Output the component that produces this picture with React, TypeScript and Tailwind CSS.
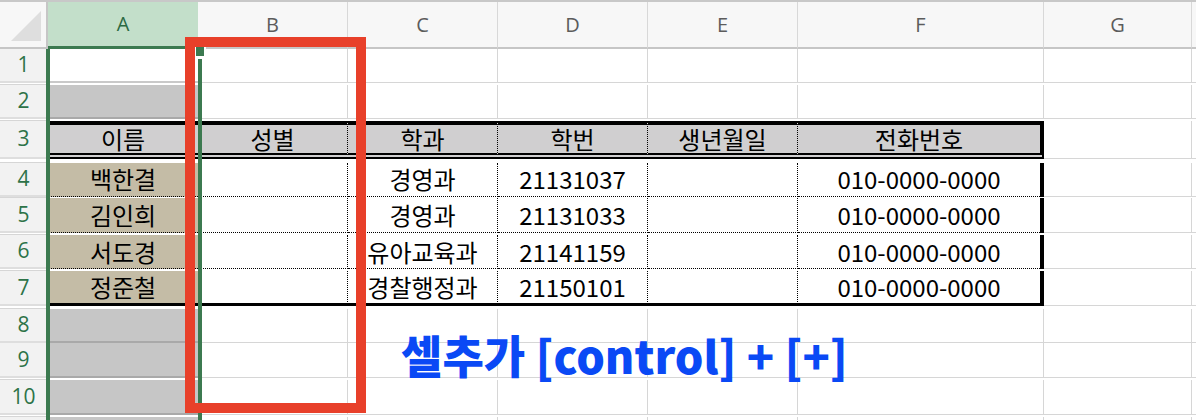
const GRID = "grid grid-cols-[48px_150px_150px_150px_150px_150px_246px_148px_4px]";
const KR = "font-['Noto_Sans_CJK_KR',sans-serif]";

const letters = ["A", "B", "C", "D", "E", "F", "G"];

type Row = {
  n: number;
  h: string;
  cells: { text?: string; cls: string; inner?: string }[];
};

// plain sheet cell with gridlines
const plain = "bg-white border-r border-b border-[#d6d6d6]";
const selGray = "bg-[#c6c6c6] border-b-2 border-b-[#a9a9a9]";
const head = "bg-[#d0cfd0] border-t-4 border-t-black border-b-[6px] border-b-black [border-bottom-style:double]";
const dotR = "border-r border-r-black [border-right-style:dotted]";
const dotB = "border-b border-b-black [border-bottom-style:dotted]";
const lastB = "border-b-[3px] border-b-black";

const students = [
  ["백한결", "경영과", "21131037"],
  ["김인희", "경영과", "21131033"],
  ["서도경", "유아교육과", "21141159"],
  ["정준철", "경찰행정과", "21150101"],
];

const emptyRow = (n: number, h: string): Row => ({
  n,
  h,
  cells: [
    { cls: selGray },
    { cls: plain },
    { cls: plain },
    { cls: plain },
    { cls: plain },
    { cls: plain },
    { cls: plain },
    { cls: "bg-white border-b border-[#d6d6d6]" },
  ],
});

const rows: Row[] = [
  {
    n: 1,
    h: "h-[36px]",
    cells: [
      { cls: "bg-white border-b-2 border-b-[#c9c9c9]" },
      { cls: plain },
      { cls: plain },
      { cls: plain },
      { cls: plain },
      { cls: plain },
      { cls: plain },
      { cls: "bg-white border-b border-[#d6d6d6]" },
    ],
  },
  emptyRow(2, "h-[36px]"),
  {
    n: 3,
    h: "h-[42px]",
    cells: [
      { text: "이름", cls: `${head} bg-[#a6a5a7]` },
      { text: "성별", cls: `${head} ${dotR}` },
      { text: "학과", cls: `${head} ${dotR}` },
      { text: "학번", cls: `${head} ${dotR}` },
      { text: "생년월일", cls: `${head} ${dotR}` },
      { text: "전화번호", cls: `${head} border-r-4 border-r-black` },
      { cls: plain },
      { cls: "bg-white border-b border-[#d6d6d6]" },
    ],
  },
  ...students.map(([name, dept, id], i): Row => {
    const last = i === students.length - 1;
    const b = last ? lastB : dotB;
    return {
      n: 4 + i,
      h: last ? "h-[38px]" : i === 0 ? "h-[35px]" : i === 1 ? "h-[37px]" : "h-[36px]",
      cells: [
        { text: name, cls: `bg-[#c4bca6] ${b}` },
        { cls: `bg-white ${dotR} ${b}` },
        { text: dept, cls: `bg-white ${dotR} ${b}` },
        { text: id, cls: `bg-white ${dotR} ${b}` },
        { cls: `bg-white ${dotR} ${b}` },
        // thick right edge kept unbroken: bottom line lives on the inner box
        { text: "010-0000-0000", cls: "bg-white border-r-4 border-r-black", inner: b },
        { cls: plain },
        { cls: "bg-white border-b border-[#d6d6d6]" },
      ],
    };
  }),
  emptyRow(8, "h-[34px]"),
  emptyRow(9, "h-[37px]"),
  emptyRow(10, "h-[37px]"),
  emptyRow(0, "h-[30px]"),
];

export default function App() {
  return (
    <div className={`relative w-[1196px] h-[420px] overflow-hidden bg-white ${KR}`}>
      <div className="h-[2px] bg-[#c8c8c8]" />

      {/* column headers */}
      <div className={`${GRID} h-[47px]`}>
        <div className="relative bg-[#f7f7f7] border-r-2 border-r-[#c6c6c6] border-b-2 border-b-[#c6c6c6]">
          <div className="absolute right-[5px] bottom-[6px] w-0 h-0 border-l-[30px] border-l-transparent border-b-[30px] border-b-[#dedede]" />
        </div>
        {letters.map((l, i) => (
          <div
            key={l}
            className={
              i === 0
                ? "flex items-center justify-center bg-[#c3dfca] text-[#2b6a43] border-b-[3px] border-b-[#3c7a50] text-[20px] font-['Open_Sans',sans-serif]"
                : "flex items-center justify-center bg-[#f7f7f7] text-[#5c5c5c] border-r border-r-[#d8d8d8] border-b-2 border-b-[#c6c6c6] text-[20px] font-['Open_Sans',sans-serif]"
            }
          >
            {l}
          </div>
        ))}
        <div className="bg-[#f7f7f7] border-b-2 border-b-[#c6c6c6]" />
      </div>

      {/* sheet rows */}
      {rows.map((r) => (
        <div key={r.n} className={`${GRID} ${r.h}`}>
          <div className="flex items-center justify-center bg-[#f2f2f2] border-b-2 border-b-[#dedede] border-r border-r-[#c9c9c9] text-[#2d7348] text-[21px] font-['Open_Sans',sans-serif]">
            {r.n > 0 ? r.n : ""}
          </div>
          {r.cells.map((c, i) =>
            c.inner ? (
              <div key={i} className={`flex ${c.cls}`}>
                <div
                  className={`flex flex-1 items-center justify-center whitespace-nowrap text-[24px] text-black leading-none ${c.inner}`}
                >
                  {c.text}
                </div>
              </div>
            ) : (
              <div
                key={i}
                className={`flex items-center justify-center whitespace-nowrap text-[24px] text-black leading-none ${c.cls}`}
              >
                {c.text}
              </div>
            )
          )}
          <div className="bg-white border-b border-[#d6d6d6]" />
        </div>
      ))}

      {/* selection of column A */}
      <div className="absolute left-[46px] top-[49px] bottom-0 w-[156px] border-x-4 border-[#3c7a50]" />
      <div className="absolute left-[194px] top-[45px] w-[12px] h-[14px] bg-white">
        <div className="ml-[2px] mt-[2px] w-[8px] h-[9px] bg-[#3c7a50]" />
      </div>

      {/* red highlight box */}
      <div className="absolute left-[185px] top-[37px] w-[181px] h-[376px] border-[10px] border-[#e8402a]" />

      {/* note */}
      <div className="absolute left-[401px] top-[332px] text-[#0a49f5] text-[45px] font-black leading-none whitespace-nowrap">
        셀추가 [control] + [+]
      </div>
    </div>
  );
}
